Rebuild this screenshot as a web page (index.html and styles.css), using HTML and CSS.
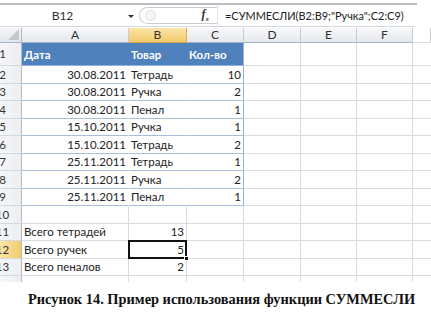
FILE: index.html
```html
<!DOCTYPE html>
<html lang="ru">
<head>
<meta charset="utf-8">
<link rel="stylesheet" href="styles.css">
</head>
<body>
<div class="page">
  <div class="topline"></div>
  <div class="fbar">
    <div class="namebox"><span class="nbtext">B12</span><span class="dd"></span></div>
    <div class="pill"><span class="knob"></span><span class="fx">f<sub>x</sub></span></div>
    <div class="formula">=СУММЕСЛИ(B2:B9;"Ручка";C2:C9)</div>
  </div>
  <div class="sheet">
    <div class="c corner"><span class="tri"></span></div>
    <div class="c ch">A</div><div class="c ch sel">B</div><div class="c ch">C</div><div class="c ch">D</div><div class="c ch">E</div><div class="c ch">F</div><div class="c ch end"></div>

    <div class="c rh"><span>1</span></div>
    <div class="c th">Дата</div><div class="c th">Товар</div><div class="c th tr">Кол-во</div><div class="c"></div><div class="c"></div><div class="c"></div><div class="c end"></div>

    <div class="c rh"><span>2</span></div>
    <div class="c tb r">30.08.2011</div><div class="c tb">Тетрадь</div><div class="c tb tr r">10</div><div class="c"></div><div class="c"></div><div class="c"></div><div class="c end"></div>

    <div class="c rh"><span>3</span></div>
    <div class="c tb r">30.08.2011</div><div class="c tb">Ручка</div><div class="c tb tr r">2</div><div class="c"></div><div class="c"></div><div class="c"></div><div class="c end"></div>

    <div class="c rh"><span>4</span></div>
    <div class="c tb r">30.08.2011</div><div class="c tb">Пенал</div><div class="c tb tr r">1</div><div class="c"></div><div class="c"></div><div class="c"></div><div class="c end"></div>

    <div class="c rh"><span>5</span></div>
    <div class="c tb r">15.10.2011</div><div class="c tb">Ручка</div><div class="c tb tr r">1</div><div class="c"></div><div class="c"></div><div class="c"></div><div class="c end"></div>

    <div class="c rh"><span>6</span></div>
    <div class="c tb r">15.10.2011</div><div class="c tb">Тетрадь</div><div class="c tb tr r">2</div><div class="c"></div><div class="c"></div><div class="c"></div><div class="c end"></div>

    <div class="c rh"><span>7</span></div>
    <div class="c tb r">25.11.2011</div><div class="c tb">Тетрадь</div><div class="c tb tr r">1</div><div class="c"></div><div class="c"></div><div class="c"></div><div class="c end"></div>

    <div class="c rh"><span>8</span></div>
    <div class="c tb r">25.11.2011</div><div class="c tb">Ручка</div><div class="c tb tr r">2</div><div class="c"></div><div class="c"></div><div class="c"></div><div class="c end"></div>

    <div class="c rh"><span>9</span></div>
    <div class="c tb r">25.11.2011</div><div class="c tb">Пенал</div><div class="c tb tr r">1</div><div class="c"></div><div class="c"></div><div class="c"></div><div class="c end"></div>

    <div class="c rh"><span>10</span></div>
    <div class="c"></div><div class="c"></div><div class="c"></div><div class="c"></div><div class="c"></div><div class="c"></div><div class="c end"></div>

    <div class="c rh"><span>11</span></div>
    <div class="c">Всего тетрадей</div><div class="c r">13</div><div class="c"></div><div class="c"></div><div class="c"></div><div class="c"></div><div class="c end"></div>

    <div class="c rh rsel"><span>12</span></div>
    <div class="c">Всего ручек</div><div class="c r active">5<span class="handle"></span></div><div class="c"></div><div class="c"></div><div class="c"></div><div class="c"></div><div class="c end"></div>

    <div class="c rh"><span>13</span></div>
    <div class="c">Всего пеналов</div><div class="c r">2</div><div class="c"></div><div class="c"></div><div class="c"></div><div class="c"></div><div class="c end"></div>

    <div class="c rh tail"></div>
    <div class="c tail"></div><div class="c tail"></div><div class="c tail"></div><div class="c tail"></div><div class="c tail"></div><div class="c tail"></div><div class="c end tail"></div>
  </div>
  <div class="caption">Рисунок 14. Пример использования функции СУММЕСЛИ</div>
</div>
</body>
</html>
```

FILE: styles.css
```css
* { box-sizing: border-box; }
html, body { margin: 0; padding: 0; background: #fff; }
.page {
  width: 431px;
  height: 317px;
  overflow: hidden;
  font-family: Lato, "Noto Sans", sans-serif;
  color: #222;
}
.topline {
  height: 5px;
  width: 417px;
  border-top: 3px solid #fff;
  background: #b9bdc2;
}
.fbar {
  display: flex;
  height: 22px;
  width: 415px;
  border-bottom: 1px solid #d3d7dc;
  align-items: stretch;
}
.namebox {
  flex: none;
  width: 139px;
  position: relative;
  display: flex;
  align-items: center;
  justify-content: center;
  font-size: 12px;
  color: #333;
  padding-right: 14px;
}
.dd {
  position: absolute;
  right: 5px;
  top: 10px;
  width: 0; height: 0;
  border-left: 3px solid transparent;
  border-right: 3px solid transparent;
  border-top: 3px solid #333;
}
.pill {
  flex: none;
  width: 78px;
  margin: 2px 0;
  border: 1px solid #c9cdd2;
  border-right: none;
  border-radius: 10px 0 0 10px;
  display: flex;
  align-items: center;
  justify-content: space-between;
  padding: 0 8px 0 5px;
  background: #fff;
}
.knob {
  width: 11px; height: 11px;
  border-radius: 50%;
  border: 1px solid #dde0e4;
  background: #f4f5f7;
}
.fx {
  font-family: "Liberation Serif", serif;
  font-style: italic;
  font-weight: bold;
  font-size: 12px;
  color: #333;
}
.fx sub { font-size: 7px; }
.formula {
  flex: 1;
  min-width: 0;
  overflow: hidden;
  white-space: nowrap;
  display: flex;
  align-items: center;
  padding-left: 7px;
  font-size: 10.95px;
  color: #222;
  border-left: 1px solid #e2e5e8;
}
.sheet {
  margin-top: 1px;
  display: grid;
  grid-template-columns: 22px 107px 58px 57px 57px 56px 56px 18px;
  grid-template-rows: 15px 23px repeat(12, 17.5px) 6px;
}
.c {
  border-right: 1px solid #dadcdf;
  border-bottom: 1px solid #dadcdf;
  font-size: 11.5px;
  white-space: nowrap;
  overflow: hidden;
  display: flex;
  align-items: center;
  padding: 0 2px;
  line-height: 1;
}
.r { justify-content: flex-end; }
.end { border-right: none; }
.tail { border-bottom: none; }
.corner {
  background: linear-gradient(#f4f5f7, #e3e6ea);
  border-right: 1px solid #b5bcc6;
  border-bottom: 1px solid #9eb6ce;
  position: relative;
}
.tri {
  position: absolute;
  right: 2px; bottom: 2px;
  width: 0; height: 0;
  border-left: 11px solid transparent;
  border-bottom: 11px solid #c4c8cd;
}
.ch {
  background: linear-gradient(#f7f8fa, #e5e8ec);
  border-right: 1px solid #c8ccd2;
  border-bottom: 1px solid #9eb6ce;
  justify-content: center;
  color: #333;
  font-size: 12px;
}
.ch.end { background: #fff; border-bottom-color: #dadcdf; }
.ch.sel {
  background: linear-gradient(#fbe6a8, #f3ca6a);
  border-right-color: #d8ad52;
  border-bottom-color: #d8a545;
}
.rh {
  background: linear-gradient(90deg, #f5f6f8, #eceef1);
  border-right: 1px solid #b5bcc6;
  border-bottom: 1px solid #d5d9de;
  justify-content: center;
  padding: 0 16px 0 0;
  color: #333;
}
.rh span { flex: none; }
.rh.rsel { background: linear-gradient(90deg, #fbe6a8, #f3ca6a); }
.rh.tail { border-bottom: none; }
.th {
  background: #4f81bd;
  color: #fff;
  font-weight: bold;
  border-right-color: #4f81bd;
  border-bottom: 1px solid #95b3d7;
  padding-top: 2px;
}
.th.tr { border-right: 1px solid #95b3d7; }
.tb {
  border-right-color: transparent;
  border-bottom: 1px solid #a7bfdd;
}
.tb.tr { border-right: 1px solid #95b3d7; }
.active {
  position: relative;
  overflow: visible;
}
.active::before {
  content: "";
  position: absolute;
  left: -1px; top: -1px; right: -1px; bottom: -1px;
  border: 2px solid #111;
}
.handle {
  position: absolute;
  right: -3px;
  bottom: -3px;
  width: 5px;
  height: 5px;
  background: #111;
  border: 1px solid #fff;
  z-index: 2;
}
.caption {
  margin-top: 9px;
  padding-left: 12px;
  text-align: center;
  font-family: "Liberation Serif", "Times New Roman", serif;
  font-weight: bold;
  font-size: 14.4px;
  color: #111;
}
```
